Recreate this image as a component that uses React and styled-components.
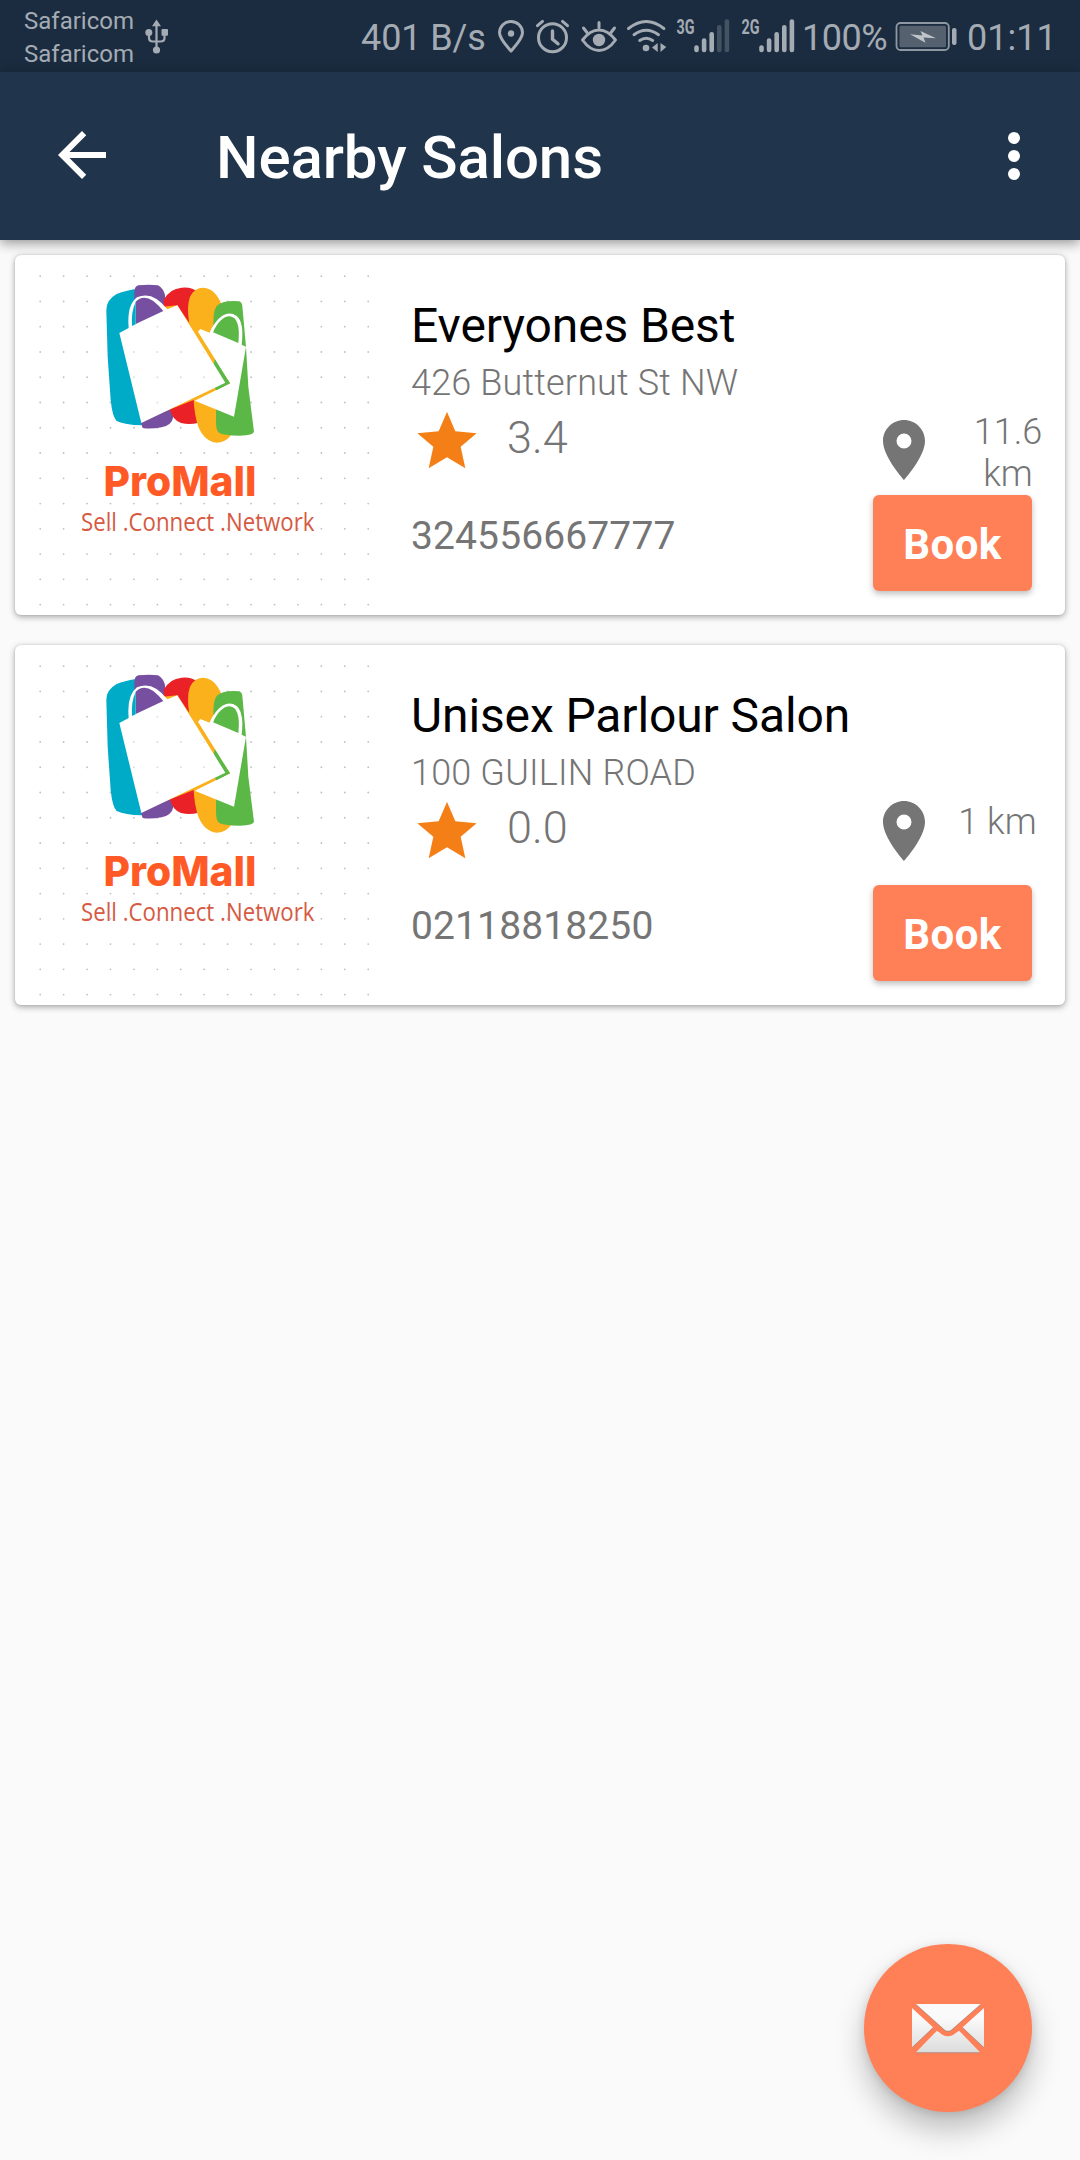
import React from "react";
import styled, { createGlobalStyle } from "styled-components";

const GlobalStyle = createGlobalStyle`
  * { box-sizing: border-box; }
  body { margin: 0; background: #fafafa; }
  svg { display: block; flex: none; }
`;

const Screen = styled.div`
  position: relative;
  display: flex;
  flex-direction: column;
  width: 1080px;
  height: 2160px;
  overflow: hidden;
  background: #fafafa;
  font-family: Roboto, "Liberation Sans", sans-serif;
`;

const StatusBar = styled.div`
  display: flex;
  justify-content: space-between;
  height: 72px;
  flex: none;
  background: #1b2c40;
  color: #a4abb3;
`;

const StatusGroup = styled.div`
  display: flex;
  height: 72px;
`;

const Carriers = styled.div`
  width: 140px;
  padding: 5px 0 0 24px;
  font-size: 24px;
  line-height: 33px;
  white-space: nowrap;
`;

const StatusText = styled.div`
  width: ${(p) => p.$width}px;
  padding-left: ${(p) => p.$inset || 0}px;
  font-size: 36px;
  line-height: 76px;
  letter-spacing: ${(p) => p.$tracking || 0}px;
  white-space: nowrap;
`;

const AppBar = styled.header`
  position: relative;
  display: flex;
  align-items: flex-start;
  height: 168px;
  flex: none;
  padding: 47px 30px 0 46px;
  background: #20354b;
  color: #fff;
  box-shadow: 0 3px 12px rgba(0, 0, 0, 0.42);
`;

const Title = styled.h1`
  flex: 1;
  margin: 3px 0 0 98px;
  font-size: 60px;
  font-weight: 500;
  line-height: 72px;
  letter-spacing: -0.1px;
`;

const MenuSlot = styled.div`
  padding-top: 1px;
`;

const List = styled.main`
  display: flex;
  flex-direction: column;
  gap: 30px;
  padding: 15px;
`;

const Card = styled.article`
  display: flex;
  height: 360px;
  border-radius: 6px;
  background: #fff;
  box-shadow: 0 2px 6px rgba(0, 0, 0, 0.34), 0 0 2px rgba(0, 0, 0, 0.14);
`;

const Info = styled.div`
  flex: 1;
  padding-top: 43px;
  color: #757575;
`;

const Name = styled.h2`
  margin: 0 0 8px;
  font-size: 48px;
  font-weight: 400;
  line-height: 56px;
  letter-spacing: -0.12px;
  color: #000;
  white-space: nowrap;
`;

const Address = styled.div`
  font-size: 36px;
  font-weight: 300;
  line-height: 42px;
  letter-spacing: 0.17px;
`;

const Rating = styled.div`
  display: flex;
  gap: 30px;
  height: 109px;
  padding: 8px 0 0 6px;
  font-size: 45px;
  font-weight: 300;
  line-height: 52px;
`;

const Phone = styled.div`
  font-size: 39px;
  line-height: 46px;
  letter-spacing: 0.12px;
`;

const Side = styled.div`
  width: 192px;
`;

const DistanceRow = styled.div`
  display: flex;
  height: 240px;
  padding: 156px 0 0 10px;
`;

const PinSlot = styled.div`
  width: 68px;
  padding-top: ${(p) => (p.$tall ? 9 : 0)}px;
`;

const Distance = styled.div`
  width: ${(p) => (p.$tall ? 114 : 93)}px;
  font-size: 36px;
  font-weight: 300;
  line-height: 42px;
  text-align: center;
  color: #757575;
`;

const BookButton = styled.button`
  display: block;
  width: 159px;
  height: 96px;
  padding: 4px 0 0;
  border: 0;
  border-radius: 6px;
  background: #ff7f57;
  color: #fff;
  font: 700 42px/48px Roboto, "Liberation Sans", sans-serif;
  letter-spacing: 0.4px;
  box-shadow: 0 3px 6px rgba(0, 0, 0, 0.26);
`;

const Fab = styled.button`
  position: absolute;
  right: 48px;
  bottom: 48px;
  display: flex;
  align-items: center;
  justify-content: center;
  width: 168px;
  height: 168px;
  padding: 2px 0 0;
  border: 0;
  border-radius: 50%;
  background: #ff7f57;
  box-shadow: 0 18px 30px rgba(0, 0, 0, 0.24), 0 2px 10px rgba(0, 0, 0, 0.12);
`;

/* Status icons share one coordinate space: the bar itself. */
const BarIcon = ({ x, width, children }) => (
  <svg width={width} height="72" viewBox={`${x} 0 ${width} 72`} fill="none" stroke="#a4abb3" strokeWidth="3" strokeLinecap="round" strokeLinejoin="round">
    {children}
  </svg>
);

const UsbIcon = () => (
  <BarIcon x={140} width={36}>
    <path d="M156.5 25V49M149 33v5q0 3.5 4 3.5h7.500q4 0 4-3.500v-5" strokeWidth="2.200" />
    <g fill="#a4abb3" stroke="none">
      <path d="M152 26.300L156.500 19.500L161 26.300z" />
      <circle cx="156.500" cy="50" r="3.600" />
      <circle cx="148.800" cy="32.500" r="3.500" />
      <rect x="161.500" y="29" width="6.500" height="6.700" rx="1" />
    </g>
  </BarIcon>
);

const LocationIcon = () => (
  <BarIcon x={490} width={40}>
    <path d="M511 51C506 45 499.500 38.500 499.500 32.700a11.500 11.300 0 0 1 23 0C522.500 38.500 516 45 511 51z" />
    <circle cx="511" cy="33.500" r="3.200" fill="#a4abb3" stroke="none" />
  </BarIcon>
);

const AlarmIcon = () => (
  <BarIcon x={530} width={45}>
    <circle cx="552.500" cy="37.700" r="14" />
    <path d="M552.500 31v8.300l5.500 4.500" strokeWidth="3.400" />
    <path d="M537.500 25.700l5-4.300M567.500 25.700l-5-4.300" />
  </BarIcon>
);

const EyeIcon = () => (
  <BarIcon x={575} width={47}>
    <path d="M582.500 40Q590 30 599 30T615.500 40Q608 50.500 599 50.500T582.500 40z" />
    <circle cx="599" cy="40" r="6.200" fill="#a4abb3" stroke="none" />
    <path d="M599 22.500v5M583.500 28l3.500 4.500M614.500 28l-3.500 4.500" />
  </BarIcon>
);

const WifiIcon = () => (
  <BarIcon x={622} width={50}>
    <path d="M628.500 28.500q17.700-14 35.400 0M634 34.700q12.200-9 24.500 0M639.700 40.500q6.500-4.500 13 0" />
    <g fill="#a4abb3" stroke="none">
      <circle cx="646" cy="48" r="3.300" />
      <path d="M652 47.500L657.700 43V52zM660.500 43l5.800 4L660.500 52z" />
    </g>
  </BarIcon>
);

const barTops = [45.3, 38.3, 32, 25, 19.2];

const SignalIcon = ({ x, label, level }) => (
  <BarIcon x={x} width={65}>
    <g fill="#a4abb3" stroke="none">
      <text x={x + 4.500} y="33.800" fontFamily="Roboto, sans-serif" fontSize="20" fontWeight="700" textLength="18" lengthAdjust="spacingAndGlyphs">
        {label}
      </text>
      {barTops.map((top, i) => (
        <rect key={top} x={x + 22.200 + i * 7.600} y={top} width="4.600" height={52.200 - top} rx="2.200" opacity={i < level ? 1 : 0.3} />
      ))}
    </g>
  </BarIcon>
);

const BatteryIcon = () => (
  <BarIcon x={890} width={72}>
    <rect x="896.500" y="23" width="52.300" height="27" rx="4" strokeWidth="1.800" stroke="#8f98a2" />
    <g stroke="none">
      <rect x="899.500" y="25.800" width="46.500" height="21.400" rx="1.500" fill="#56616f" />
      <rect x="952" y="28" width="4.500" height="17" rx="2" fill="#a4abb3" />
      <path d="M910 34.200L922.500 35.600L920.500 31L936 38.300L923.500 37.500L925.500 42.700z" fill="#c0c5ca" />
    </g>
  </BarIcon>
);

const BackIcon = () => (
  <svg width="72" height="72" viewBox="0 0 24 24" fill="#fff">
    <path d="M20 11H7.830l5.590-5.590L12 4l-8 8 8 8 1.410-1.410L7.830 13H20v-2z" />
  </svg>
);

const MoreIcon = () => (
  <svg width="72" height="72" viewBox="0 0 24 24" fill="#fff">
    <circle cx="12" cy="6" r="2" />
    <circle cx="12" cy="12" r="2" />
    <circle cx="12" cy="18" r="2" />
  </svg>
);

const StarIcon = () => (
  <svg width="60" height="57" viewBox="0 1.500 180 171" fill="#f57f17">
    <path d="M90 1L115 59L179 65L131 106L145 170L90 137L35 170L49 106L1 65L65 59z" />
  </svg>
);

const PinIcon = () => (
  <svg width="42" height="60" viewBox="5 2 14 20" fill="#757575">
    <path d="M12 2C8.130 2 5 5.130 5 9c0 5.250 7 13 7 13s7-7.750 7-13c0-3.870-3.130-7-7-7zm0 9.500a2.500 2.500 0 0 1 0-5 2.500 2.500 0 0 1 0 5z" />
  </svg>
);

const MailIcon = () => (
  <svg width="72" height="52" viewBox="0 0 216 156">
    <defs>
      <linearGradient id="paper" gradientUnits="userSpaceOnUse" x1="0" y1="0" x2="0" y2="150">
        <stop offset="0.300" stopColor="#fafafa" />
        <stop offset="1" stopColor="#dcdcdc" />
      </linearGradient>
    </defs>
    <g fill="#a28a80" opacity="0.750" transform="translate(0 3)">
      <path d="M12 3H206L118 80Q108 87 98 80z" />
      <path d="M0 15L63 73L0 133zM216 15L152 73L216 133z" />
      <path d="M12 148L75 83L91 95Q108 104 124 95L141 83L204 148z" />
    </g>
    <g fill="url(#paper)">
      <path d="M12 3H206L118 80Q108 87 98 80z" />
      <path d="M0 15L63 73L0 133zM216 15L152 73L216 133z" />
      <path d="M12 148L75 83L91 95Q108 104 124 95L141 83L204 148z" />
    </g>
  </svg>
);

const dotColumns = Array.from({ length: 15 }, (_, i) => 25.2 + i * 23.43);
const dotRows = Array.from({ length: 14 }, (_, i) => 21.2 + i * 25.26);

const DotGrid = () => dotRows.map((y) => dotColumns.map((x) => <circle key={`${x}-${y}`} cx={x} cy={y} r="0.900" />));

const SalonLogo = () => (
  <svg width="396" height="360" viewBox="0 0 396 360">
    <defs>
      <clipPath id="bagFront">
        <path d="M106 79L160 52L209 127L127 166z" />
      </clipPath>
    </defs>
    <g fill="#c0c0c0">
      <DotGrid />
    </g>
    <g transform="translate(75 15) scale(0.33333)">
      <path d="M137 57Q103 63 80 72Q48 90 49 121L53 260L62 390Q67 440 80 453Q105 465 155 466L230 300L180 90z" fill="#00abc8" />
      <path d="M133 180V65Q134 49 145 46Q178 43 204 46Q225 57 226 85L250 440Q246 465 215 472Q180 478 158 474L153 459z" fill="#774fa0" />
      <path d="M221 90Q238 56 275 53Q306 50 325 67V458Q300 465 273 459Q247 449 239 416z" fill="#ea2127" />
      <path d="M297 155Q290 107 300 80Q314 52 341 53Q376 56 395 104L390 380L422 497Q404 518 380 518Q343 514 325 470Q313 435 311 390z" fill="#fab11c" />
      <path d="M371 180Q367 125 380 108Q398 90 448 94Q456 97 457 108L468 230L475 350L492 485Q491 496 450 497Q398 496 387 488Q378 481 378 455V360z" fill="#5bb847" />
      <path d="M331 177Q348 184 359 188Q375 152 397 137Q420 124 439 137Q463 154 455 224L468 230L432 440L314 392L420 340L324 185z" fill="#fff" />
      <path d="M369 187Q390 140 419 139Q453 142 445 219z" fill="#5bb847" />
      <path d="M359 188Q365 173 373 163L369 190z" fill="#fff" />
      <path d="M262 106L420 340L311 390L160 450L220 110z" fill="#fab11c" />
      <path d="M374 270L420 340L379 361L360 330z" fill="#5bb847" />
      <path d="M88 189L116 174Q110 105 141 82Q188 61 232 118L262 106L406 338L154 459z" fill="#fff" />
      <path d="M137 162V95Q159 73 190 93Q207 107 220 123z" fill="#774fa0" />
      <path d="M126 168Q123 124 137 96V163z" fill="#00abc8" />
    </g>
    <g fill="#dcdcdc" clipPath="url(#bagFront)">
      <DotGrid />
    </g>
    <text x="88.500" y="241" fontFamily="Inter, Lato, sans-serif" fontSize="41.500" fontWeight="800" textLength="153" fill="#ff5a26" lengthAdjust="spacingAndGlyphs">
      ProMall
    </text>
    <text x="66" y="275.500" fontFamily="'Open Sans', 'Noto Sans', sans-serif" fontSize="25" textLength="233.500" fill="#d65a43" lengthAdjust="spacingAndGlyphs">
      Sell .Connect .Network
    </text>
  </svg>
);

const salons = [
  { name: "Everyones Best", address: "426 Butternut St NW", rating: "3.4", phone: "324556667777", distance: "11.6 km", tall: true },
  { name: "Unisex Parlour Salon", address: "100 GUILIN ROAD", rating: "0.0", phone: "02118818250", distance: "1 km", tall: false },
];

const SalonCard = ({ salon }) => (
  <Card>
    <SalonLogo />
    <Info>
      <Name>{salon.name}</Name>
      <Address>{salon.address}</Address>
      <Rating>
        <StarIcon />
        {salon.rating}
      </Rating>
      <Phone>{salon.phone}</Phone>
    </Info>
    <Side>
      <DistanceRow>
        <PinSlot $tall={salon.tall}>
          <PinIcon />
        </PinSlot>
        <Distance $tall={salon.tall}>{salon.distance}</Distance>
      </DistanceRow>
      <BookButton>Book</BookButton>
    </Side>
  </Card>
);

export default function App() {
  return (
    <Screen>
      <GlobalStyle />
      <StatusBar>
        <StatusGroup>
          <Carriers>
            <div>Safaricom</div>
            <div>Safaricom</div>
          </Carriers>
          <UsbIcon />
        </StatusGroup>
        <StatusGroup>
          <StatusText $width={129} $tracking={-0.1}>401 B/s</StatusText>
          <LocationIcon />
          <AlarmIcon />
          <EyeIcon />
          <WifiIcon />
          <SignalIcon x={672} label="3G" level={3} />
          <SignalIcon x={737} label="2G" level={5} />
          <StatusText $width={88} $inset={-1} $tracking={-0.5}>
            100%
          </StatusText>
          <BatteryIcon />
          <StatusText $width={118} $inset={5}>01:11</StatusText>
        </StatusGroup>
      </StatusBar>
      <AppBar>
        <BackIcon />
        <Title>Nearby Salons</Title>
        <MenuSlot>
          <MoreIcon />
        </MenuSlot>
      </AppBar>
      <List>
        {salons.map((salon) => (
          <SalonCard key={salon.name} salon={salon} />
        ))}
      </List>
      <Fab aria-label="Message">
        <MailIcon />
      </Fab>
    </Screen>
  );
}
